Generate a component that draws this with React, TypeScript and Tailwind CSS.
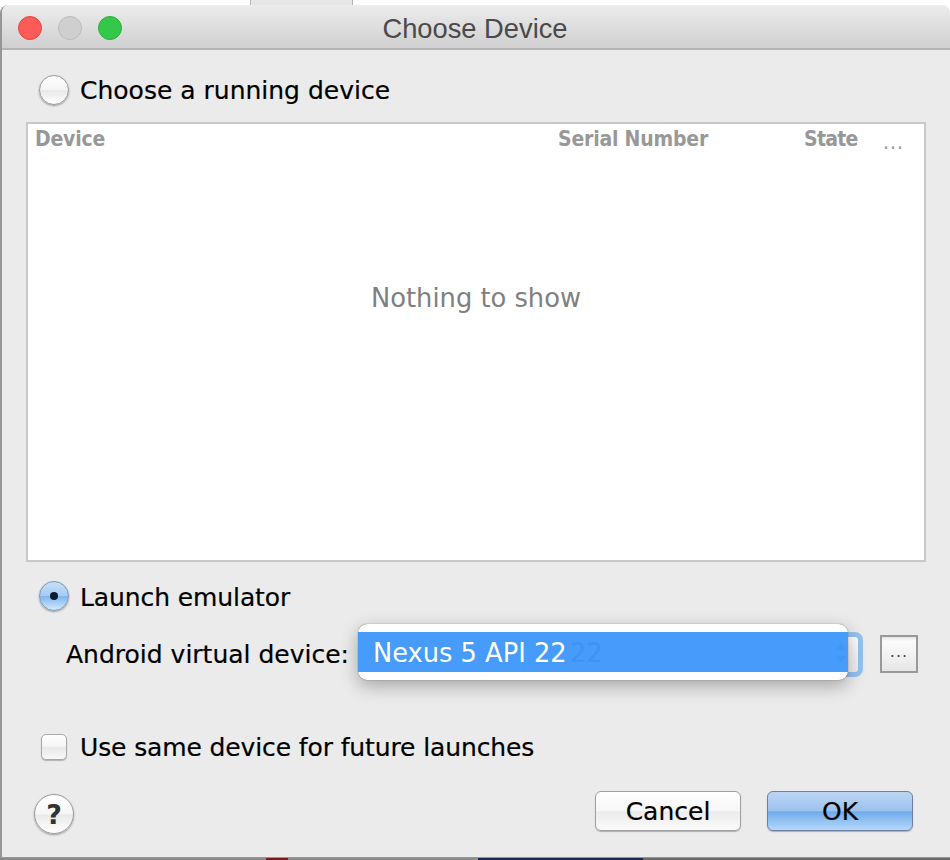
import React from 'react';

const uiFont = "font-['DejaVu_Sans',sans-serif]";
const labelText = 'text-[25px] leading-[30px] text-black [-webkit-text-stroke:0.2px_black]';

const App: React.FC = () => {
    return (
        <div className={`w-[950px] h-[860px] bg-white overflow-hidden flex flex-col ${uiFont}`}>
            <div className="h-[5px] shrink-0 pl-[250px]">
                <div className="w-[103px] h-[5px] bg-[#e6e6e6] border-x border-[#b5b5b5]" />
            </div>

            <div className="h-[853px] shrink-0 flex flex-col bg-[#ebebeb] rounded-t-[8px] border-l-2 border-b border-[#969696] overflow-hidden relative">
                <div className="h-[45px] shrink-0 flex items-center relative border-b-2 border-[#b4b4b4] bg-gradient-to-b from-[#ececec] to-[#d0d0d0]">
                    <div className="flex gap-4 pl-4 pt-[3px]">
                        <div className="w-6 h-6 rounded-full bg-[#fc5b57] border border-[#e2463f]" />
                        <div className="w-6 h-6 rounded-full bg-[#cfcfcf] border border-[#bcbcbc]" />
                        <div className="w-6 h-6 rounded-full bg-[#34c84a] border border-[#2aae3c]" />
                    </div>
                    <div className="absolute inset-x-0 top-[7px] pr-[2px] text-center text-[27.3px] leading-[34px] text-[#4a4a4a] font-['Liberation_Sans',sans-serif]">
                        Choose Device
                    </div>
                </div>

                <div className="mt-[25px] pl-[37px] h-[30px] flex items-center gap-[11px]">
                    <div className="w-[30px] h-[30px] rounded-full border border-[#9a9a9a] shadow-[0_1px_2px_rgba(0,0,0,0.35)] bg-[linear-gradient(#ffffff,#f4f4f4_50%,#e9e9e9_52%,#ffffff)]" />
                    <span className={`${labelText} pt-[2px]`}>Choose a running device</span>
                </div>

                <div className="mt-[17px] ml-6 w-[900px] h-[440px] shrink-0 bg-white border-2 border-[#c8c8c8] flex flex-col">
                    <div className="h-[30px] flex items-center text-[21px] leading-[30px] font-bold text-[#989898] font-['DejaVu_Sans_Condensed','DejaVu_Sans',sans-serif] tracking-[-0.2px]">
                        <span className="pl-[7px] w-[530px]">Device</span>
                        <span className="w-[246px]">Serial Number</span>
                        <span className="w-[79px] tracking-[-0.7px]">State</span>
                        <span className="font-normal pt-[6px] tracking-[1px]">...</span>
                    </div>
                    <div className="pt-[129px] text-center text-[25.75px] leading-[30px] text-[#808080]">Nothing to show</div>
                </div>

                <div className="mt-[19px] pl-[37px] h-[30px] flex items-center gap-[11px]">
                    <div className="w-[30px] h-[30px] rounded-full border border-[#7d98b8] shadow-[0_1px_2px_rgba(0,0,0,0.35)] bg-[linear-gradient(#c9e0f8,#a3caf2_50%,#7fb5ee_52%,#d6eafd)] flex items-center justify-center">
                        <div className="w-2 h-2 rounded-full bg-[#0c1c30]" />
                    </div>
                    <span className={`${labelText} pt-[3px] tracking-[-0.1px]`}>Launch emulator</span>
                </div>

                <div className="mt-[21px] pl-[64px] h-[44px] flex items-center relative">
                    <span className={`${labelText} w-[292px] pt-[2px]`}>Android virtual device:</span>
                    <div className="w-[505px] h-[45px] rounded-[8px] border-[5px] border-[#94c3f0] bg-[linear-gradient(#ffffff,#eeeeee)]" />
                    <div className="ml-[17px] w-[38px] h-[38px] border-2 border-[#999999] bg-[linear-gradient(#e4e4e4,#fbfbfb_12%,#f0f0f0_60%,#e6e6e6)] flex items-center justify-center text-[16px] leading-none tracking-[1px] text-[#444444] pb-1">
                        ...
                    </div>

                    <div className="absolute left-[356px] top-[-8px] w-[490px] h-[56px] bg-white rounded-[9px] shadow-[0_0_1px_rgba(0,0,0,0.7),0_6px_18px_rgba(0,0,0,0.3)] overflow-hidden">
                        <div className="mt-2 h-10 bg-[#469bfb] flex items-center pl-[15px] text-[25.7px] leading-[30px] text-white relative">
                            <span className="pt-[2px]">Nexus 5 API 22</span>
                            <span className="absolute left-[212px] pt-[2px] text-[#3f93f2]">22</span>
                            <svg className="absolute right-[1px] top-[11px]" width="12" height="20" viewBox="0 0 12 20" fill="#4097f7">
                                <path d="M6 1 L11 7 H1 Z" />
                                <path d="M6 19 L11 13 H1 Z" />
                            </svg>
                        </div>
                    </div>
                </div>

                <div className="mt-[58px] pl-[39px] h-[26px] flex items-center gap-[13px]">
                    <div className="w-[26px] h-[26px] rounded-[5px] border border-[#a8a8a8] shadow-[0_1px_1px_rgba(0,0,0,0.25)] bg-[linear-gradient(#ffffff,#f4f4f4_50%,#e9e9e9_52%,#f8f8f8)]" />
                    <span className={`${labelText} pt-[2px] tracking-[-0.12px]`}>Use same device for future launches</span>
                </div>

                <div className="mt-[31px] pl-[32px] h-[43px] flex items-start">
                    <div className="mt-[3px] w-10 h-10 rounded-full border border-[#9a9a9a] shadow-[0_1px_2px_rgba(0,0,0,0.35)] bg-[linear-gradient(#ffffff,#f6f6f6_50%,#e9e9e9_52%,#ffffff)] flex items-center justify-center text-[27px] leading-none font-bold text-[#333333]">
                        ?
                    </div>
                    <button className="ml-[521px] w-[146px] h-10 pt-[2px] rounded-[6px] border border-[#a0a0a0] shadow-[0_1px_1px_rgba(0,0,0,0.25)] bg-[linear-gradient(#ffffff,#f6f6f6_50%,#ebebeb_52%,#fbfbfb)] text-[25px] leading-[30px] text-black [-webkit-text-stroke:0.2px_black]">
                        Cancel
                    </button>
                    <button className="ml-[26px] w-[146px] h-10 pt-[2px] rounded-[6px] border border-[#6f7f9e] shadow-[0_1px_1px_rgba(0,0,0,0.25)] bg-[linear-gradient(#bcd5f4,#9cc2ee_50%,#6fabec_52%,#b6d8fa)] text-[25px] leading-[30px] text-black [-webkit-text-stroke:0.2px_black]">
                        OK
                    </button>
                </div>
            </div>

            <div className="h-[2px] shrink-0 flex bg-[#8a8a8a]">
                <div className="ml-[266px] w-[22px] bg-[#7a1a1a]" />
                <div className="ml-[190px] w-[165px] bg-[#1c2a55]" />
                <div className="w-[307px] bg-[#6a6a6a]" />
            </div>
        </div>
    );
};

export default App;
